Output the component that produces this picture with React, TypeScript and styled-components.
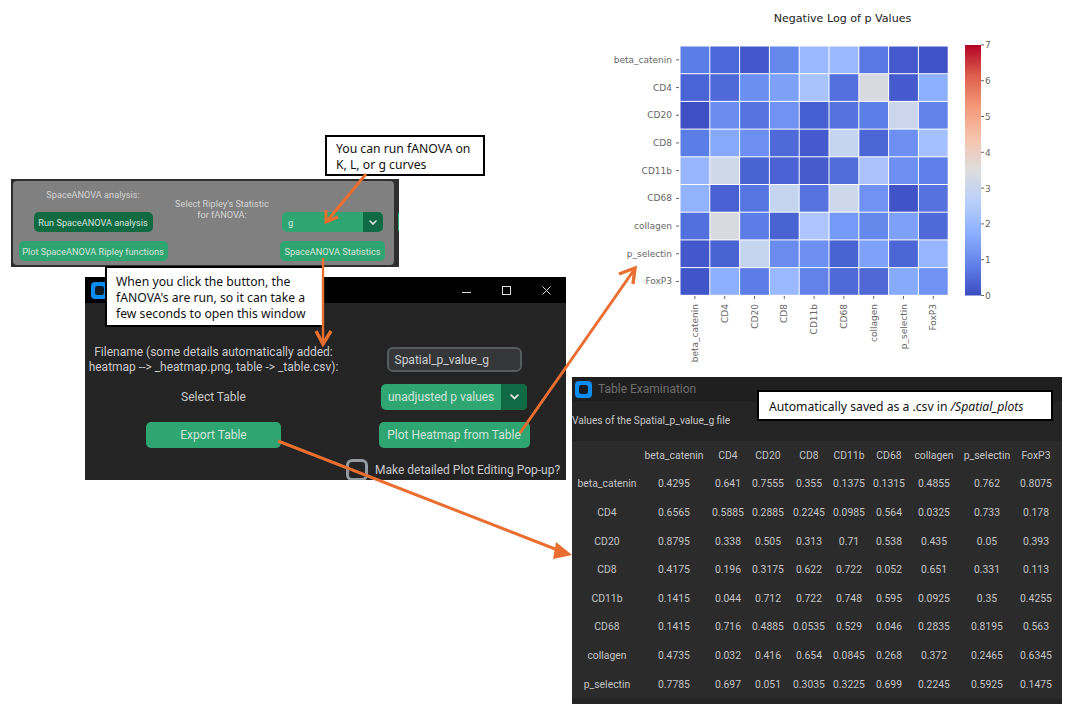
import React from 'react';
import styled, { createGlobalStyle } from 'styled-components';

const Global = createGlobalStyle`
  html, body { margin: 0; padding: 0; background: #fff; }
  * { box-sizing: border-box; }
`;

const Canvas = styled.div`
  position: relative;
  width: 1066px;
  height: 704px;
  overflow: hidden;
  background: #fff;
  font-family: Roboto, "Liberation Sans", sans-serif;
`;

const ChartSvg = styled.svg`
  position: absolute;
  left: 600px;
  top: 0;
  font-family: "DejaVu Sans", sans-serif;
`;

const ArrowLayer = styled.svg`
  position: absolute;
  inset: 0;
  z-index: 5;
  pointer-events: none;
`;

const Callout = styled.div<{ $x: number; $y: number; $w: number; $h: number; $pad?: number }>`
  position: absolute;
  z-index: 4;
  left: ${p => p.$x}px;
  top: ${p => p.$y}px;
  width: ${p => p.$w}px;
  height: ${p => p.$h}px;
  padding: 2px 0 0 ${p => p.$pad ?? 9}px;
  display: flex;
  flex-direction: column;
  justify-content: center;
  background: #fff;
  border: 2px solid #000;
  color: #111;
  font-family: "Noto Sans", sans-serif;
  font-size: 12.2px;
  line-height: 16px;
  white-space: nowrap;
  em { font-style: italic; }
`;

const AnalysisPanel = styled.section`
  position: absolute;
  left: 11px;
  top: 179px;
  width: 388px;
  height: 88px;
  padding: 2px 5px 2px 2px;
  background: #2e2e2e;
`;

const AnalysisInner = styled.div`
  display: grid;
  grid-template-columns: 160px 98px 1fr;
  height: 100%;
  background: #808080;
  border-radius: 4px;
  color: #d4d4d4;
  font-size: 9.2px;
`;

const Col = styled.div<{ $top: number }>`
  display: flex;
  flex-direction: column;
  align-items: center;
  padding-top: ${p => p.$top}px;
  text-align: center;
  line-height: 11px;
`;

const SmallLabel = styled.div<{ $h: number }>`
  height: ${p => p.$h}px;
`;

const SmallButton = styled.div<{ $w: number; $dark?: boolean }>`
  width: ${p => p.$w}px;
  height: 20px;
  margin-bottom: 9px;
  display: flex;
  align-items: center;
  justify-content: center;
  border-radius: 5px;
  background: ${p => (p.$dark ? '#126a43' : '#2fa572')};
  color: #d4e4dc;
  font-size: 9.2px;
  white-space: nowrap;
`;

const Select = styled.div<{ $w: number; $h: number; $arrow: number; $size: number; $pad: number }>`
  width: ${p => p.$w}px;
  height: ${p => p.$h}px;
  display: grid;
  grid-template-columns: 1fr ${p => p.$arrow}px;
  align-items: stretch;
  border-radius: 5px;
  overflow: hidden;
  background: #2fa572;
  color: #d4e4dc;
  font-size: ${p => p.$size}px;
  & > span {
    display: flex;
    align-items: center;
    padding-left: ${p => p.$pad}px;
    white-space: nowrap;
  }
`;

const SelectArrow = styled.div`
  display: flex;
  align-items: center;
  justify-content: center;
  background: #106a43;
`;

const Sliver = styled.div`
  position: absolute;
  right: 0;
  top: 34px;
  width: 1px;
  height: 18px;
  background: #2fa572;
`;

const AppWindow = styled.section`
  position: absolute;
  left: 85px;
  top: 277px;
  width: 481px;
  height: 203px;
  background: #242424;
  overflow: hidden;
`;

const TitleBar = styled.header`
  display: flex;
  align-items: center;
  height: 26px;
  padding: 0 15px 0 6px;
  background: #000;
`;

const WindowControls = styled.div`
  margin-left: auto;
  display: flex;
  gap: 31px;
  align-items: center;
`;

const WindowBody = styled.div`
  position: relative;
  display: grid;
  grid-template-columns: 257px 224px;
  grid-template-rows: 25px 26px 26px 22px;
  row-gap: 12px;
  padding-top: 44px;
  color: #c9c9c9;
  font-size: 12px;
  justify-items: center;
  align-items: center;
`;

const FileLabel = styled.div`
  text-align: center;
  line-height: 15px;
  white-space: nowrap;
`;

const Entry = styled.div`
  width: 135px;
  height: 25px;
  display: flex;
  align-items: center;
  padding-left: 6px;
  background: #343638;
  border: 2px solid #565b5e;
  border-radius: 6px;
  color: #d0d0d0;
  font-size: 12px;
`;

const BigButton = styled.div<{ $w: number }>`
  width: ${p => p.$w}px;
  height: 26px;
  display: flex;
  align-items: center;
  justify-content: center;
  background: #2fa572;
  border-radius: 5px;
  color: #cfe3d9;
  font-size: 12px;
  white-space: nowrap;
`;

const CheckRow = styled.div`
  grid-column: 2;
  justify-self: start;
  margin: -2px 0 0 4px;
  display: flex;
  align-items: center;
  gap: 7px;
  white-space: nowrap;
`;

const CheckBox = styled.div`
  width: 22px;
  height: 22px;
  border: 3px solid #949a9f;
  border-radius: 6px;
`;

const TableWindow = styled.section`
  position: absolute;
  left: 572px;
  top: 377px;
  width: 490px;
  height: 327px;
  background: #242424;
  color: #c4c4c4;
  overflow: hidden;
`;

const TableTitle = styled.header`
  display: flex;
  align-items: center;
  gap: 6px;
  height: 24px;
  padding-left: 3px;
  background: #1f1f1f;
  color: #6e6e6e;
  font-size: 12px;
`;

const TableCaption = styled.div`
  height: 40px;
  padding-top: 13px;
  font-size: 10.2px;
  line-height: 13px;
  color: #c8c8c8;
`;

const DataTable = styled.table`
  table-layout: fixed;
  width: 490px;
  border-collapse: collapse;
  background: #2b2b2b;
  font-size: 10.4px;
  th, td {
    padding: 0;
    height: 28.6px;
    text-align: center;
    font-weight: 400;
    white-space: nowrap;
  }
`;

const labels = ['beta_catenin', 'CD4', 'CD20', 'CD8', 'CD11b', 'CD68', 'collagen', 'p_selectin', 'FoxP3'];

const heat = [
  ['#5a7de6', '#4b67d8', '#4358cb', '#6488ec', '#9ab8ff', '#9bb9ff', '#5a78e4', '#445acc', '#3f52c6'],
  ['#4b64d5', '#4f69d9', '#6b8ff0', '#7ea1f8', '#a9c3fd', '#5370de', '#d9dadf', '#455bcd', '#8caffe'],
  ['#3e4fc4', '#6a8cef', '#5673e0', '#7093f3', '#4760d1', '#5572df', '#5b7ee7', '#cbd6ec', '#6282ea'],
  ['#5b7de6', '#86a9fc', '#6c8ff1', '#4f6ad8', '#455bcd', '#c6d5ef', '#4c66d6', '#6c8ff1', '#a5c0fe'],
  ['#98b6fe', '#cdd8e9', '#4a63d3', '#4a62d3', '#465ccd', '#506dda', '#abc3fd', '#6c8ff1', '#5f7fe8'],
  ['#92b2fe', '#4960d2', '#5675e0', '#c5d4ef', '#5673e0', '#cdd8eb', '#7093f3', '#4054c7', '#5572df'],
  ['#5271de', '#d9dadf', '#5c7de6', '#4a63d3', '#aec6fd', '#7599f6', '#6488ec', '#7da0f9', '#4f6ad8'],
  ['#4358cb', '#4a63d3', '#c6d5ef', '#6a8cef', '#6c8ff1', '#4a63d3', '#7ea1f9', '#4c66d6', '#96b4ff'],
  ['#4055c8', '#8caffe', '#5c7de6', '#9ab8ff', '#6282ea', '#4f6ad8', '#4f68d6', '#87abfc', '#7093f3'],
];

const tableRows: [string, string[]][] = [
  ['beta_catenin', ['0.4295', '0.641', '0.7555', '0.355', '0.1375', '0.1315', '0.4855', '0.762', '0.8075']],
  ['CD4', ['0.6565', '0.5885', '0.2885', '0.2245', '0.0985', '0.564', '0.0325', '0.733', '0.178']],
  ['CD20', ['0.8795', '0.338', '0.505', '0.313', '0.71', '0.538', '0.435', '0.05', '0.393']],
  ['CD8', ['0.4175', '0.196', '0.3175', '0.622', '0.722', '0.052', '0.651', '0.331', '0.113']],
  ['CD11b', ['0.1415', '0.044', '0.712', '0.722', '0.748', '0.595', '0.0925', '0.35', '0.4255']],
  ['CD68', ['0.1415', '0.716', '0.4885', '0.0535', '0.529', '0.046', '0.2835', '0.8195', '0.563']],
  ['collagen', ['0.4735', '0.032', '0.416', '0.654', '0.0845', '0.268', '0.372', '0.2465', '0.6345']],
  ['p_selectin', ['0.7785', '0.697', '0.051', '0.3035', '0.3225', '0.699', '0.2245', '0.5925', '0.1475']],
];

const colWidths = [70, 64, 44, 36, 46, 34, 46, 44, 62, 36, 8];

const Chevron = ({ size = 8 }: { size?: number }) => (
  <svg width={size} height={size * 0.625} viewBox="0 0 8 5">
    <path d="M1 1l3 3 3-3" fill="none" stroke="#e0e0e0" strokeWidth="1.6" strokeLinecap="round" />
  </svg>
);

const AppIcon = () => (
  <svg width="17" height="17" viewBox="0 0 17 17">
    <rect width="17" height="17" rx="4" fill="#0a8cf0" />
    <rect x="4" y="4" width="9" height="9" rx="2.2" fill="#141a22" />
  </svg>
);

const cx0 = 80, cy0 = 46, cw = 29.8, ch = 27.7;

const Heatmap = () => (
  <ChartSvg width="420" height="375" viewBox="0 0 420 375">
    <defs>
      <linearGradient id="cw" x1="0" y1="1" x2="0" y2="0">
        <stop offset="0" stopColor="#3b4cc0" />
        <stop offset="0.125" stopColor="#6282ea" />
        <stop offset="0.25" stopColor="#8db0fe" />
        <stop offset="0.375" stopColor="#b8d0f9" />
        <stop offset="0.5" stopColor="#dddddd" />
        <stop offset="0.625" stopColor="#f5c4ad" />
        <stop offset="0.75" stopColor="#f49a7b" />
        <stop offset="0.875" stopColor="#de604d" />
        <stop offset="1" stopColor="#b40426" />
      </linearGradient>
    </defs>
    <text x="242.5" y="22" textAnchor="middle" fontSize="11.1" fill="#222">Negative Log of p Values</text>
    {heat.map((row, r) =>
      row.map((c, i) => (
        <rect key={`${r}-${i}`} x={cx0 + i * cw + 0.5} y={cy0 + r * ch + 0.5} width={cw - 1} height={ch - 1} fill={c} />
      )),
    )}
    {labels.map((l, i) => (
      <g key={l} fill="#666">
        <text x="72" y={cy0 + (i + 0.5) * ch + 3} textAnchor="end" fontSize="9">{l}</text>
        <rect x="76" y={cy0 + (i + 0.5) * ch - 0.5} width="3" height="1" />
        <rect x={cx0 + (i + 0.5) * cw - 0.5} y="296" width="1" height="3" />
        <text
          transform={`translate(${cx0 + (i + 0.5) * cw + 3} 304) rotate(-90)`}
          textAnchor="end"
          fontSize="9"
        >
          {l}
        </text>
      </g>
    ))}
    <rect x="365" y="45" width="16" height="250.5" fill="url(#cw)" />
    {[0, 1, 2, 3, 4, 5, 6, 7].map(v => (
      <g key={v} fill="#666">
        <rect x="381" y={295.5 - v * 35.8 - 0.5} width="3" height="1" />
        <text x="385" y={295.5 - v * 35.8 + 3.5} fontSize="9">{v}</text>
      </g>
    ))}
  </ChartSvg>
);

const Arrows = () => {
  const o = '#ea6e2f';
  return (
    <ArrowLayer width="1066" height="704" viewBox="0 0 1066 704">
      <g stroke={o} strokeWidth="3" fill="none" strokeLinecap="butt" strokeLinejoin="miter">
        <path d="M366 174L328 220" />
        <path d="M326 210L326 222L338 217" />
        <path d="M323 258V344" strokeWidth="2.4" />
        <path d="M316 331L323 344L331 331" strokeWidth="3.4" />
        <path d="M520 433L634 270" />
        <path d="M619 274L635 268L633 284" strokeWidth="3.4" />
        <path d="M278 441L568 554" />
      </g>
      <path d="M572 555L556 542L553 559Z" fill={o} />
    </ArrowLayer>
  );
};

export default function App() {
  return (
    <Canvas>
      <Global />
      <Heatmap />

      <Callout $x={325} $y={135} $w={160} $h={41}>
        <div>You can run fANOVA on</div>
        <div>K, L, or g curves</div>
      </Callout>

      <AnalysisPanel>
        <AnalysisInner>
          <Col $top={8}>
            <SmallLabel $h={23}>SpaceANOVA analysis:</SmallLabel>
            <SmallButton $w={119} $dark>Run SpaceANOVA analysis</SmallButton>
            <SmallButton $w={149}>Plot SpaceANOVA Ripley functions</SmallButton>
          </Col>
          <Col $top={17}>
            <div>Select Ripley's Statistic<br />for fANOVA:</div>
          </Col>
          <Col $top={31}>
            <Select $w={101} $h={20} $arrow={20} $size={9.5} $pad={6}>
              <span>g</span>
              <SelectArrow><Chevron /></SelectArrow>
            </Select>
            <div style={{ height: 9 }} />
            <SmallButton $w={105}>SpaceANOVA Statistics</SmallButton>
          </Col>
        </AnalysisInner>
        <Sliver />
      </AnalysisPanel>

      <Callout $x={105} $y={266} $w={219} $h={61}>
        <div>When you click the button, the</div>
        <div>fANOVA's are run, so it can take a</div>
        <div>few seconds to open this window</div>
      </Callout>

      <AppWindow>
        <TitleBar>
          <AppIcon />
          <WindowControls>
            <svg width="9" height="9" viewBox="0 0 9 9"><path d="M0 6.5h9" stroke="#ddd" strokeWidth="1" /></svg>
            <svg width="9" height="9" viewBox="0 0 9 9"><rect x=".5" y=".5" width="8" height="8" fill="none" stroke="#ddd" /></svg>
            <svg width="9" height="9" viewBox="0 0 9 9"><path d="M.5.5l8 8M8.5.5l-8 8" stroke="#ddd" /></svg>
          </WindowControls>
        </TitleBar>
        <WindowBody>
          <FileLabel>
            Filename (some details automatically added:<br />
            heatmap --&gt; _heatmap.png, table -&gt; _table.csv):
          </FileLabel>
          <Entry>Spatial_p_value_g</Entry>
          <div>Select Table</div>
          <Select $w={146} $h={26} $arrow={26} $size={12} $pad={7}>
            <span>unadjusted p values</span>
            <SelectArrow><Chevron size={9} /></SelectArrow>
          </Select>
          <BigButton $w={135}>Export Table</BigButton>
          <BigButton $w={151}>Plot Heatmap from Table</BigButton>
          <CheckRow>
            <CheckBox />
            <span>Make detailed Plot Editing Pop-up?</span>
          </CheckRow>
        </WindowBody>
      </AppWindow>

      <TableWindow>
        <TableTitle>
          <AppIcon />
          Table Examination
        </TableTitle>
        <TableCaption>Values of the Spatial_p_value_g file</TableCaption>
        <DataTable>
          <colgroup>
            {colWidths.map((w, i) => <col key={i} style={{ width: w }} />)}
          </colgroup>
          <thead>
            <tr>
              <th />
              {labels.map(l => <th key={l}>{l}</th>)}
              <th />
            </tr>
          </thead>
          <tbody>
            {tableRows.map(([name, vals]) => (
              <tr key={name}>
                <td>{name}</td>
                {vals.map((v, i) => <td key={i}>{v}</td>)}
                <td />
              </tr>
            ))}
          </tbody>
        </DataTable>
      </TableWindow>

      <Callout $x={757} $y={390} $w={296} $h={31} $pad={10}>
        <div>Automatically saved as a .csv in <em>/Spatial_plots</em></div>
      </Callout>

      <Arrows />
    </Canvas>
  );
}
